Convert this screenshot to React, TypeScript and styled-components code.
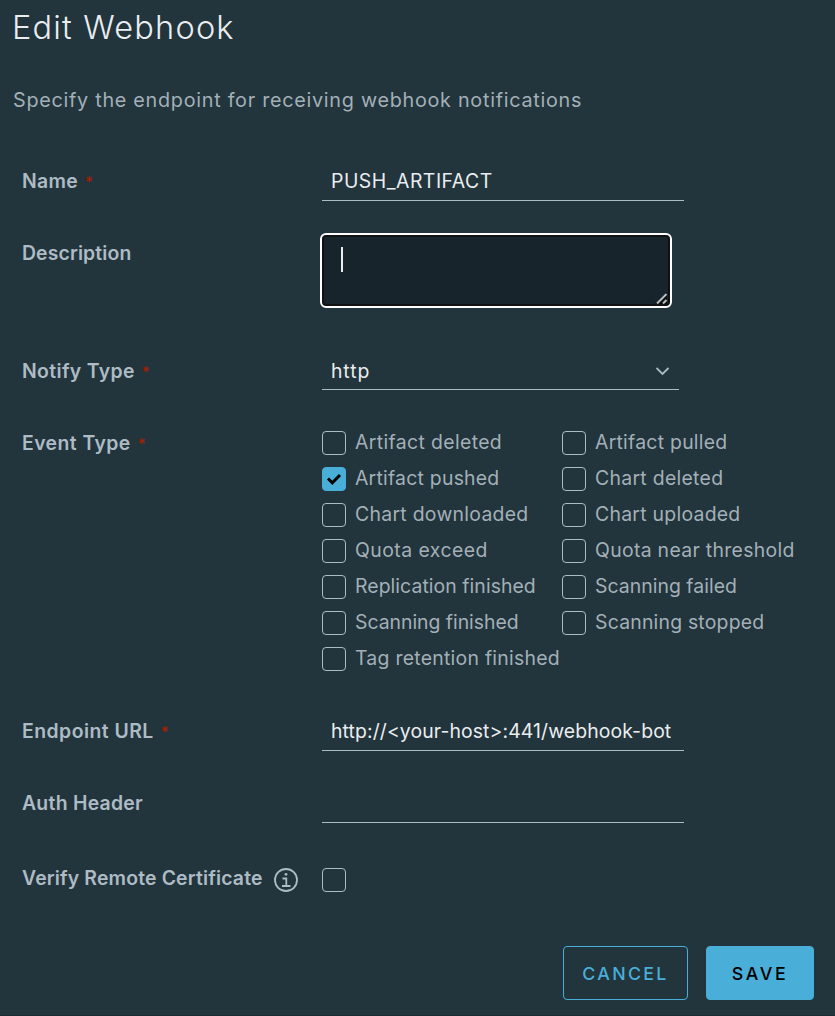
import React from 'react';
import styled, { createGlobalStyle } from 'styled-components';

const Global = createGlobalStyle`
  body { margin: 0; background: #22343c; font-family: Inter, "Liberation Sans", sans-serif; }
  * { box-sizing: border-box; }
`;
const Dialog = styled.main`
  height: 1016px;
  padding: 8px 21px 16px 22px;
  display: flex;
  flex-direction: column;
  background: #22343c;
  color: #adbbc4;
  font-size: 19.4px;
  line-height: 24px;
  border-bottom: 1px solid #1c2a31;
`;
const Title = styled.h1`
  margin: 0 0 40px -10px;
  font-size: 32.5px;
  font-weight: 300;
  line-height: 40px;
  letter-spacing: 1.2px;
  color: #eaedf0;
`;
const Subtitle = styled.p`
  margin: 0 0 57px -9px;
  font-size: 19.8px;
  letter-spacing: 0.72px;
  color: #a3b0b8;
  white-space: nowrap;
`;
const Row = styled.div<{ $h: number }>`
  display: grid;
  grid-template-columns: 300px 1fr;
  align-items: start;
  height: ${p => p.$h}px;
  flex: none;
`;
const Label = styled.label<{ $ls: number }>`
  display: flex;
  font-weight: 600;
  letter-spacing: ${p => p.$ls}px;
  white-space: nowrap;
`;
const Star = styled.span`
  margin: 1px 0 0 7px;
  font-size: 15px;
  font-weight: 500;
  color: #a32100;
`;
const Field = styled.div<{ $w?: number; $h?: number; $ls?: number }>`
  display: flex;
  justify-content: space-between;
  width: ${p => p.$w ?? 362}px;
  height: ${p => p.$h ?? 32}px;
  padding: 0 9px;
  border-bottom: 1px solid #adbbc4;
  color: #eaedf0;
  letter-spacing: ${p => p.$ls ?? 0}px;
  white-space: nowrap;
`;
const TextArea = styled.div`
  display: flex;
  justify-content: space-between;
  width: 352px;
  height: 75px;
  margin: -8px 0 0 -2px;
  padding: 11px 0 0 19px;
  border: 2px solid #fff;
  border-radius: 6px;
  background: #18242b;
  box-shadow: inset 0 0 0 2px #101214;
`;
const Caret = styled.span`
  width: 2px;
  height: 25px;
  margin-top: 1px;
  background: #eaedf0;
`;
const Grip = styled.svg`
  align-self: flex-end;
  margin: 0 2px 1px 0;
`;
const Options = styled.div`
  display: grid;
  grid-template-columns: 240px 1fr;
  grid-auto-rows: 36px;
`;
const Option = styled.div<{ $ls: number }>`
  display: flex;
  gap: 9px;
  letter-spacing: ${p => p.$ls}px;
  color: #a3b0b8;
  white-space: nowrap;
`;
const OptionText = styled.span`
  margin-top: -1px;
`;
const Box = styled.span<{ $on?: boolean; $drop?: number }>`
  display: flex;
  align-items: center;
  justify-content: center;
  flex: none;
  width: 24px;
  height: 24px;
  margin-top: ${p => p.$drop ?? 0}px;
  border: 1px solid ${p => (p.$on ? '#49afd9' : '#adbbc4')};
  border-radius: 4px;
  background: ${p => (p.$on ? '#49afd9' : 'transparent')};
`;
const Info = styled.svg`
  margin: 2px 0 0 11px;
`;
const Footer = styled.footer`
  display: flex;
  justify-content: flex-end;
  gap: 18px;
  margin-top: 5px;
`;
const Button = styled.button<{ $w: number; $ls: number; $primary?: boolean }>`
  width: ${p => p.$w}px;
  height: 54px;
  padding: 1px 0 0;
  border: 1px solid #49afd9;
  border-radius: 4px;
  background: ${p => (p.$primary ? '#49afd9' : 'transparent')};
  color: ${p => (p.$primary ? '#000' : '#49afd9')};
  font: 500 17.8px Inter, sans-serif;
  letter-spacing: ${p => p.$ls}px;
`;

const events: [string, number, boolean?][] = [
  ['Artifact deleted', 0.37], ['Artifact pulled', 0.26],
  ['Artifact pushed', 0.24, true], ['Chart deleted', 0.3],
  ['Chart downloaded', 0.29], ['Chart uploaded', 0.27],
  ['Quota exceed', 0.47], ['Quota near threshold', 0.32],
  ['Replication finished', 0.07], ['Scanning failed', 0.04],
  ['Scanning finished', -0.02], ['Scanning stopped', 0.21],
  ['Tag retention finished', 0.27],
];

function FormLabel({ text, ls, required }: { text: string; ls: number; required?: boolean }) {
  return <Label $ls={ls}>{text}{required && <Star>*</Star>}</Label>;
}

export default function App() {
  return (
    <>
      <Global />
      <Dialog>
        <Title>Edit Webhook</Title>
        <Subtitle>Specify the endpoint for receiving webhook notifications</Subtitle>
        <Row $h={72}>
          <FormLabel text="Name" ls={0.3} required />
          <Field $ls={0.5}>PUSH_ARTIFACT</Field>
        </Row>
        <Row $h={118}>
          <FormLabel text="Description" ls={0.12} />
          <TextArea>
            <Caret />
            <Grip width="14" height="14" viewBox="0 0 14 14">
              <path d="M1 13 13 1V13Z" fill="#0b0d0f" />
              <path d="M3 12.5 12.5 3M9 12.5 12.5 9" stroke="#b9c1c5" strokeWidth="2" fill="none" />
            </Grip>
          </TextArea>
        </Row>
        <Row $h={72}>
          <FormLabel text="Notify Type" ls={0.36} required />
          <Field $w={357} $h={31} $ls={0.9}>
            http
            <svg width="14" height="24" viewBox="0 0 14 24">
              <path d="M.5 9 6.5 15 12.5 9" fill="none" stroke="#adbbc4" strokeWidth="1.8" />
            </svg>
          </Field>
        </Row>
        <Row $h={288}>
          <FormLabel text="Event Type" ls={0.43} required />
          <Options>
            {events.map(([name, ls, on]) => (
              <Option key={name} $ls={ls}>
                <Box $on={on}>
                  {on && (
                    <svg width="16" height="14" viewBox="0 0 16 14">
                      <path d="M2 6.5 6.3 10.8 14 3" fill="none" stroke="#000" strokeWidth="3" />
                    </svg>
                  )}
                </Box>
                <OptionText>{name}</OptionText>
              </Option>
            ))}
          </Options>
        </Row>
        <Row $h={72}>
          <FormLabel text="Endpoint URL" ls={0.46} required />
          <Field $ls={0.11}>{'http://<your-host>:441/webhook-bot'}</Field>
        </Row>
        <Row $h={75}>
          <FormLabel text="Auth Header" ls={0.26} />
          <Field />
        </Row>
        <Row $h={75}>
          <Label $ls={0.16}>
            Verify Remote Certificate
            <Info width="24" height="24" viewBox="0 0 24 24" fill="none" stroke="#adbbc4" strokeWidth="1.8">
              <circle cx="12" cy="12" r="11" />
              <path d="M8.5 10.5H12.3V18M8 18H16.5" />
              <circle cx="12" cy="6.3" r="1.4" fill="#adbbc4" stroke="none" />
            </Info>
          </Label>
          <Box $drop={2} />
        </Row>
        <Footer>
          <Button $w={125} $ls={2.3}>CANCEL</Button>
          <Button $w={108} $ls={2.6} $primary>SAVE</Button>
        </Footer>
      </Dialog>
    </>
  );
}
